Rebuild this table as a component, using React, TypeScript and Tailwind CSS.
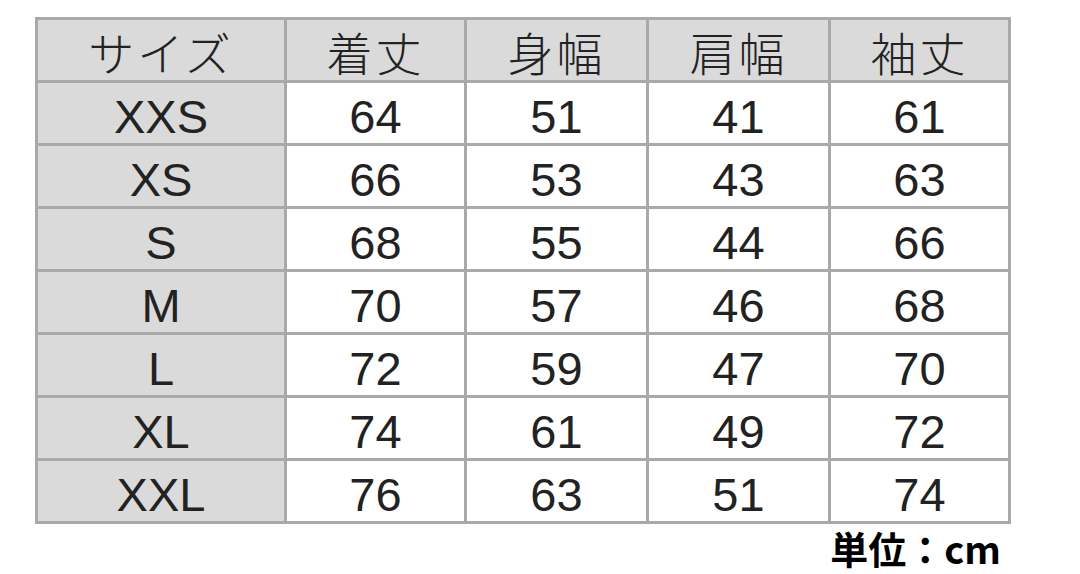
const headers = ["サイズ", "着丈", "身幅", "肩幅", "袖丈"];

const rows: [string, number, number, number, number][] = [
  ["XXS", 64, 51, 41, 61],
  ["XS", 66, 53, 43, 63],
  ["S", 68, 55, 44, 66],
  ["M", 70, 57, 46, 68],
  ["L", 72, 59, 47, 70],
  ["XL", 74, 61, 49, 72],
  ["XXL", 76, 63, 51, 74],
];

export default function App() {
  return (
    <div className="w-[1080px] h-[574px] bg-white pl-[35px] pt-[17px] font-['Liberation_Sans','Noto_Sans_CJK_JP',sans-serif] text-[#222]">
      <div className="grid w-fit grid-cols-[246px_177px_179px_179px_177px] grid-rows-[60px_repeat(7,60px)] gap-[3px] p-[3px] bg-[#a9a9a9]">
        {headers.map(h => (
          <div
            key={h}
            className="bg-[#dadada] flex items-center justify-center pt-[2px] text-[46px] font-['Noto_Sans_CJK_JP',sans-serif] font-light tracking-[3px]"
          >
            {h}
          </div>
        ))}
        {rows.map(r => (
          <Row key={r[0]} r={r} />
        ))}
      </div>
      <div className="w-[966px] text-right mt-[4px] text-[38px] leading-[40px] font-bold text-black font-['Noto_Sans_CJK_JP',sans-serif]">
        単位：cm
      </div>
    </div>
  );
}

function Row({ r }: { r: [string, number, number, number, number] }) {
  return (
    <>
      <div className="bg-[#dadada] flex items-center justify-center pt-[9px] text-[47px]">
        {r[0]}
      </div>
      {r.slice(1).map((v, i) => (
        <div key={i} className="bg-white flex items-center justify-center pt-[9px] text-[47px]">
          {v}
        </div>
      ))}
    </>
  );
}
